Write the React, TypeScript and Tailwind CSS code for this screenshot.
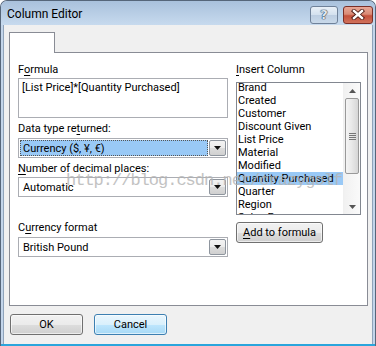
import React from "react";

const U = ({ children }: { children: React.ReactNode }) => (
  <span className="underline decoration-1 underline-offset-[2px]">{children}</span>
);

function DropBtn() {
  return (
    <div className="w-[17px] h-full border border-[#8e959e] rounded-[2px] bg-[linear-gradient(#f3f3f3_0%,#ececec_50%,#dcdcdc_51%,#d0d0d0_100%)] flex items-center justify-center">
      <svg width="7" height="4" viewBox="0 0 7 4">
        <path d="M0 0h7L3.5 4z" fill="#111" />
      </svg>
    </div>
  );
}

function Select({ text, selected }: { text: string; selected?: boolean }) {
  return (
    <div className="h-[20px] border border-[#abadb3] bg-white flex items-stretch p-px gap-px">
      <div
        className={
          selected
            ? "flex-1 flex items-center pl-[2px] bg-[#99c9f6] border border-dotted border-[#555]"
            : "flex-1 flex items-center pl-[3px]"
        }
      >
        <span className="leading-[15px]">{text}</span>
      </div>
      <DropBtn />
    </div>
  );
}

function WinButton({ children, focused, className }: { children: React.ReactNode; focused?: boolean; className?: string }) {
  return (
    <div
      className={
        (focused
          ? "border-[#3c7fb1] bg-[linear-gradient(#eaf6fd_0%,#d9f0fc_50%,#bee6fd_51%,#a7d9f5_100%)] "
          : "border-[#707070] bg-[linear-gradient(#f2f2f2_0%,#ebebeb_50%,#dddddd_51%,#cfcfcf_100%)] ") +
        "h-[21px] rounded-[3px] border flex items-center justify-center shadow-[inset_0_0_0_1px_rgba(255,255,255,0.6)] " +
        (className ?? "")
      }
    >
      <span className="leading-[15px]">{children}</span>
    </div>
  );
}

const items = [
  "Brand",
  "Created",
  "Customer",
  "Discount Given",
  "List Price",
  "Material",
  "Modified",
  "Quantity Purchased",
  "Quarter",
  "Region",
  "Sales Person",
];

export default function App() {
  return (
    <div className="w-[376px] h-[346px] relative overflow-hidden font-['Roboto',sans-serif] text-[11px] text-black">
      <div className="w-full h-full flex flex-col rounded-t-[7px] border border-b-0 border-[#56667a] bg-[#c3d5ea] overflow-hidden">
        {/* Title bar */}
        <div className="h-[24px] flex items-center bg-[linear-gradient(#a9c1dc,#c7daee)] pl-[6px] pr-[2px]">
          <span className="text-[12px] leading-[16px] text-[#000] mt-[2px]">Column Editor</span>
          <div className="flex-1" />
          <div className="flex items-center gap-[5px] mt-[3px]">
            <div className="w-[28px] h-[18px] rounded-[3px] border border-[#6f8199] bg-[linear-gradient(#e9f0f7_0%,#d3e0ee_50%,#bccde1_51%,#c9d9ea_100%)] flex items-center justify-center">
              <span className="font-['DejaVu_Sans',sans-serif] font-bold text-[13px] leading-[13px] text-[#dfe7f1] [text-shadow:0_0_1px_#2b3a4f,0_0_1px_#2b3a4f,0_0_1px_#2b3a4f]">
                ?
              </span>
            </div>
            <div className="w-[30px] h-[18px] rounded-[3px] border border-[#7a2f27] bg-[linear-gradient(#e8a796_0%,#d98a76_45%,#c4503b_55%,#d1735d_100%)] flex items-center justify-center">
              <svg width="14" height="11" viewBox="0 0 14 11">
                <path d="M3 2l8 7M11 2l-8 7" stroke="#4a1a14" strokeWidth="4.2" strokeLinecap="square" />
                <path d="M3 2l8 7M11 2l-8 7" stroke="#ffffff" strokeWidth="2.4" strokeLinecap="square" />
              </svg>
            </div>
          </div>
        </div>

        {/* Client area */}
        <div className="flex-1 mx-[2px] border-x border-[#8fa3ba] bg-[#f0f0f0] flex flex-col">
          {/* tab strip */}
          <div className="mt-[7px] ml-[5px] flex">
            <div className="w-[46px] h-[21px] border border-b-0 border-[#898c95] bg-white relative z-10 -mb-px" />
          </div>
          {/* panel */}
          <div className="ml-[5px] w-[359px] h-[254px] border border-[#898c95] bg-white pt-[9px] pl-[8px] pr-[6px] flex gap-[8px]">
            {/* left column */}
            <div className="w-[210px] flex flex-col">
              <div className="h-[15px] leading-[15px]">
                F<U>o</U>rmula
              </div>
              <div className="mt-[1px] h-[40px] border border-[#abadb3] bg-white px-[3px] pt-[1px]">
                <span className="leading-[15px]">[List Price]*[Quantity Purchased]</span>
              </div>
              <div className="mt-[3px] h-[15px] leading-[15px]">
                Data type re<U>t</U>urned:
              </div>
              <div className="mt-[2px]">
                <Select text="Currency ($, ¥, €)" selected />
              </div>
              <div className="mt-[3px] h-[15px] leading-[15px]">
                <U>N</U>umber of decimal places:
              </div>
              <div className="mt-[1px]">
                <Select text="Automatic" />
              </div>
              <div className="mt-[23px] h-[15px] leading-[15px]">
                C<U>u</U>rrency format
              </div>
              <div className="mt-[2px]">
                <Select text="British Pound" />
              </div>
            </div>
            {/* right column */}
            <div className="w-[125px] flex flex-col">
              <div className="h-[15px] leading-[15px]">
                <U>I</U>nsert Column
              </div>
              <div className="mt-[5px] h-[133px] border border-[#828790] bg-white flex overflow-hidden">
                <div className="flex-1 overflow-hidden">
                  <div className="-mt-[2px]">
                    {items.map((it) => (
                      <div
                        key={it}
                        className={
                          "h-[13px] leading-[13px] pl-[1px] whitespace-nowrap " +
                          (it === "Quantity Purchased" ? "bg-[#99c9f6]" : "")
                        }
                      >
                        {it}
                      </div>
                    ))}
                  </div>
                </div>
                {/* scrollbar */}
                <div className="w-[17px] flex flex-col items-stretch bg-[linear-gradient(90deg,#f1f1f1,#fafafa)] border-l border-[#f0f0f0]">
                  <div className="h-[15px] flex items-center justify-center">
                    <svg width="7" height="4" viewBox="0 0 7 4">
                      <path d="M0 4h7L3.5 0z" fill="#555" />
                    </svg>
                  </div>
                  <div className="h-[76px] mx-[1px] rounded-[2px] border border-[#999] bg-[linear-gradient(90deg,#f4f4f4,#e9e9e9_45%,#d6d6d6)] flex flex-col items-center justify-center gap-[1px]">
                    <div className="w-[7px] h-[1px] bg-[#777]" />
                    <div className="w-[7px] h-[1px] bg-[#777]" />
                    <div className="w-[7px] h-[1px] bg-[#777]" />
                    <div className="w-[7px] h-[1px] bg-[#777]" />
                  </div>
                  <div className="flex-1" />
                  <div className="h-[15px] flex items-center justify-center">
                    <svg width="7" height="4" viewBox="0 0 7 4">
                      <path d="M0 0h7L3.5 4z" fill="#555" />
                    </svg>
                  </div>
                </div>
              </div>
              <div className="mt-[7px] flex">
                <WinButton className="w-[87px]">
                  <U>A</U>dd to formula
                </WinButton>
              </div>
            </div>
          </div>
          {/* bottom buttons */}
          <div className="mt-[8px] ml-[6px] flex gap-[11px]">
            <WinButton className="w-[73px]">OK</WinButton>
            <WinButton className="w-[73px]" focused>
              Cancel
            </WinButton>
          </div>
        </div>
        <div className="h-[2px] bg-[#2aa5dc]" />
      </div>
      {/* watermark overlay */}
      <div className="absolute left-[66px] top-[171px] pointer-events-none font-['Liberation_Mono',monospace] text-[17px] leading-[20px] tracking-[-1px] text-[#b4b4b4] opacity-80 whitespace-nowrap">
        http://blog.csdn.net/crazygolf
      </div>
    </div>
  );
}
